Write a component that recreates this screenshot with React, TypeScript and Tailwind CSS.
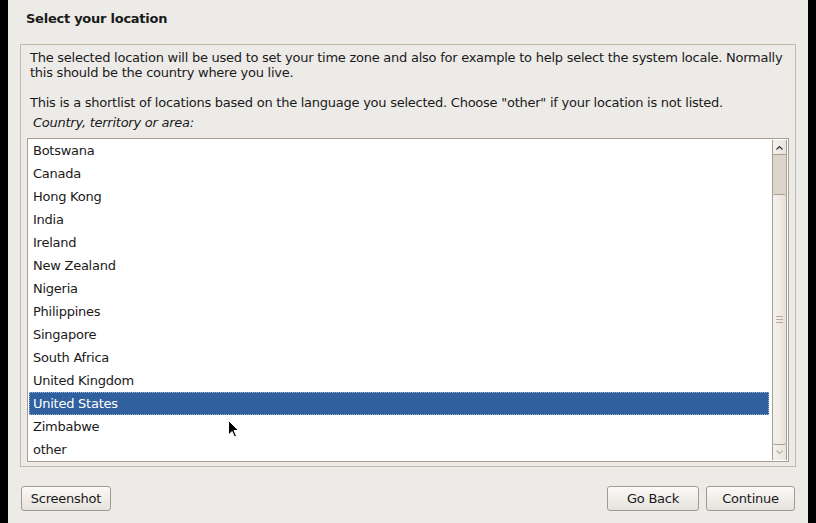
import React from 'react';

const countries = [
  'Botswana',
  'Canada',
  'Hong Kong',
  'India',
  'Ireland',
  'New Zealand',
  'Nigeria',
  'Philippines',
  'Singapore',
  'South Africa',
  'United Kingdom',
  'United States',
  'Zimbabwe',
  'other',
];

const selected = 'United States';

function GtkButton({ label, className = '' }: { label: string; className?: string }) {
  return (
    <button
      className={`h-[25px] rounded-[3px] border border-[#a39a8c] bg-gradient-to-b from-[#fbfaf9] to-[#e6e2dc] text-[13px] tracking-[-0.25px] text-[#1a1a1a] ${className}`}
    >
      {label}
    </button>
  );
}

export default function App() {
  return (
    <div className="flex h-[523px] w-[816px] bg-black font-['DejaVu_Sans',sans-serif] tracking-[-0.25px] text-[#1a1a1a]">
      <div className="w-[8px]" />
      <div className="relative flex w-[800px] flex-col bg-[#edebe8]">
        <h1 className="pl-[18px] pt-[11px] text-[13px] font-bold leading-[16px]">Select your location</h1>

        <div className="mx-[12px] mt-[17px] h-[423px] border border-[#c2b8a8] px-[6px] pt-[5px]">
          <p className="pl-[3px] text-[13px] leading-[15px]">
            The selected location will be used to set your time zone and also for example to help select the system locale. Normally this should be the country where you live.
          </p>
          <p className="mt-[15px] pl-[3px] text-[13px] leading-[15px]">
            This is a shortlist of locations based on the language you selected. Choose "other" if your location is not listed.
          </p>
          <p className="mt-[5px] pl-[6px] text-[13px] italic leading-[15px]">Country, territory or area:</p>

          <div className="mt-[8px] flex h-[324px] border border-[#a89e8f] bg-white">
            <ul className="flex-1">
              {countries.map((c) => (
                <li
                  key={c}
                  className={
                    c === selected
                      ? 'ml-[1px] mr-[3px] flex h-[23px] items-center border border-dotted border-[#9bb5d8] bg-[#30609e] pl-[3px] text-[13px] text-white'
                      : 'flex h-[23px] items-center pl-[5px] text-[13px]'
                  }
                >
                  {c}
                </li>
              ))}
            </ul>

            <div className="my-[1px] mr-[1px] flex w-[15px] flex-col border-x border-[#a89e8f] bg-[#e9e6e1]">
              <div className="flex h-[15px] items-center justify-center rounded-t-[3px] border-b border-[#a89e8f] bg-gradient-to-r from-[#f6f4f1] to-[#e8e4de]">
                <svg width="7" height="5" viewBox="0 0 7 5">
                  <path d="M0.5 4.5 L3.5 1.5 L6.5 4.5" fill="none" stroke="#333" strokeWidth="1.2" />
                </svg>
              </div>
              <div className="h-[39px] bg-[#ddd5ca]" />
              <div className="flex flex-1 items-center justify-center rounded-[2px] border-y border-[#a89e8f] bg-gradient-to-r from-[#f4f1ee] via-[#f0ebe6] to-[#e6dfd8]">
                <div className="flex flex-col gap-[2px]">
                  <div className="h-[1px] w-[7px] bg-[#b7ab9b]" />
                  <div className="h-[1px] w-[7px] bg-[#b7ab9b]" />
                  <div className="h-[1px] w-[7px] bg-[#b7ab9b]" />
                </div>
              </div>
              <div className="flex h-[15px] items-center justify-center rounded-b-[3px] bg-gradient-to-r from-[#f6f4f1] to-[#e8e4de]">
                <svg width="7" height="5" viewBox="0 0 7 5">
                  <path d="M0.5 0.5 L3.5 3.5 L6.5 0.5" fill="none" stroke="#b8b0a6" strokeWidth="1.2" />
                </svg>
              </div>
            </div>
          </div>
        </div>

        <div className="mt-[19px] flex items-center px-[13px]">
          <GtkButton label="Screenshot" className="w-[90px]" />
          <div className="flex-1" />
          <GtkButton label="Go Back" className="w-[92px]" />
          <GtkButton label="Continue" className="ml-[7px] w-[89px] border-[#8a8073]" />
        </div>

        <svg className="absolute left-[220px] top-[420px]" width="12" height="19" viewBox="0 0 12 19">
          <path d="M0.5 0.5 L0.5 15 L4 11.5 L6.5 17 L8.5 16 L6 10.5 L10.5 10.5 Z" fill="#000" stroke="#fff" strokeWidth="1" />
        </svg>
      </div>
      <div className="w-[8px]" />
    </div>
  );
}
